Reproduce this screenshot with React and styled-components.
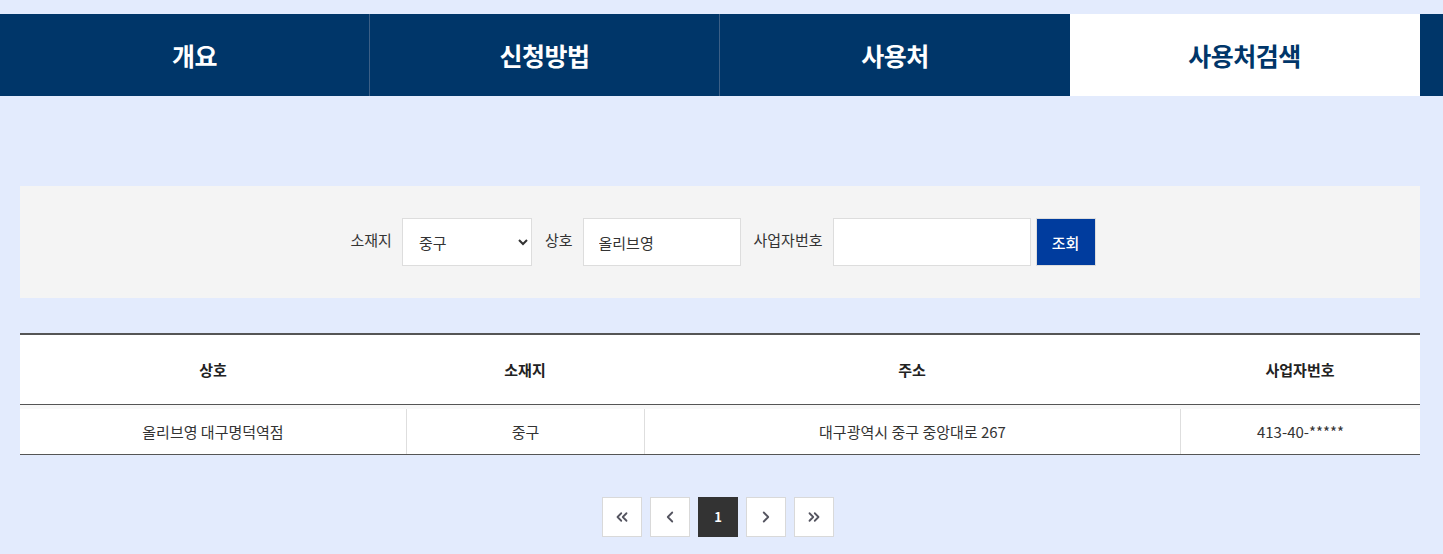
import styled, { createGlobalStyle } from 'styled-components';
import { ChevronLeft, ChevronRight, ChevronsLeft, ChevronsRight } from 'lucide-react';

const GlobalStyle = createGlobalStyle`
    html, body {
        margin: 0;
        padding: 0;
        background: #e3ebfd;
        font-family: "Noto Sans CJK KR", "Noto Sans", sans-serif;
        color: #333333;
    }
    * { box-sizing: border-box; }
`;

const tabs = ['개요', '신청방법', '사용처', '사용처검색'];

const columns = [
    { title: '상호', width: 386 },
    { title: '소재지', width: 238 },
    { title: '주소', width: 536 },
    { title: '사업자번호', width: 240 },
];

const rows = [
    ['올리브영 대구명덕역점', '중구', '대구광역시 중구 중앙대로 267', '413-40-*****'],
];

export default function App() {
    return (
        <>
            <GlobalStyle />
            <Page>
                <TabBar>
                    <TabList>
                        {tabs.map((t, i) => (
                            <Tab key={t} active={i === tabs.length - 1}>{t}</Tab>
                        ))}
                    </TabList>
                </TabBar>

                <Container>
                    <SearchBox>
                        <Label>소재지</Label>
                        <Select defaultValue="중구">
                            <option>중구</option>
                            <option>동구</option>
                            <option>서구</option>
                        </Select>
                        <Label>상호</Label>
                        <Input width={158} defaultValue="올리브영" />
                        <Label>사업자번호</Label>
                        <Input width={198} defaultValue="" />
                        <SearchButton>조회</SearchButton>
                    </SearchBox>

                    <Table>
                        <colgroup>
                            {columns.map(c => <col key={c.title} style={{ width: c.width }} />)}
                        </colgroup>
                        <thead>
                            <tr>
                                {columns.map(c => <Th key={c.title}>{c.title}</Th>)}
                            </tr>
                        </thead>
                        <tbody>
                            {rows.map((r, i) => (
                                <tr key={i}>
                                    {r.map((cell, j) => <Td key={j} first={j === 0}><span>{cell}</span></Td>)}
                                </tr>
                            ))}
                        </tbody>
                    </Table>

                    <Pagination>
                        <PageButton><ChevronsLeft size={18} strokeWidth={2.4} /></PageButton>
                        <PageButton><ChevronLeft size={18} strokeWidth={2.4} /></PageButton>
                        <PageButton active>1</PageButton>
                        <PageButton><ChevronRight size={18} strokeWidth={2.4} /></PageButton>
                        <PageButton><ChevronsRight size={18} strokeWidth={2.4} /></PageButton>
                    </Pagination>
                </Container>
            </Page>
        </>
    );
}

const Page = styled.div`
    padding-top: 14px;
    width: 1443px;
    height: 554px;
    overflow: hidden;
`;

const TabBar = styled.nav`
    background: #003669;
    height: 82px;
    padding-left: 20px;
`;

const TabList = styled.ul`
    display: flex;
    margin: 0;
    padding: 0;
    list-style: none;
    width: 1400px;
    height: 100%;
`;

const Tab = styled.li`
    width: 350px;
    display: flex;
    align-items: center;
    justify-content: center;
    font-size: 25px;
    font-weight: 700;
    letter-spacing: -0.5px;
    color: ${props => props.active ? '#003669' : '#ffffff'};
    background: ${props => props.active ? '#ffffff' : 'transparent'};
    border-right: 1px solid ${props => props.active ? 'transparent' : '#3b5f86'};

    &:nth-child(3) { border-right: none; }
`;

const Container = styled.div`
    width: 1400px;
    margin-left: 20px;
    padding-top: 90px;
`;

const SearchBox = styled.div`
    background: #f4f4f4;
    height: 112px;
    display: flex;
    align-items: center;
    justify-content: center;
    padding-left: 6px;
`;

const Label = styled.span`
    font-size: 15px;
    color: #333;
    margin: 0 10px 0 13px;
    position: relative;
    top: -3px;

    &:first-child { margin-left: 0; }
`;

const Select = styled.select`
    width: 130px;
    height: 48px;
    border: 1px solid #dddddd;
    background: #ffffff;
    padding: 0 12px;
    font-family: inherit;
    font-size: 15px;
    color: #333;
    border-radius: 0;
    outline: none;
`;

const Input = styled.input`
    width: ${props => props.width}px;
    height: 48px;
    border: 1px solid #dddddd;
    background: #ffffff;
    padding: 0 15px;
    font-family: inherit;
    font-size: 15px;
    color: #333;
    outline: none;
`;

const SearchButton = styled.button`
    width: 60px;
    height: 48px;
    margin-left: 5px;
    background: #003c9e;
    border: 1px solid #dddddd;
    color: #ffffff;
    font-family: inherit;
    font-size: 15px;
    font-weight: 500;
    cursor: pointer;
`;

const Table = styled.table`
    width: 1400px;
    margin-top: 35px;
    border-collapse: collapse;
    table-layout: fixed;
    background: #ffffff;
    border-top: 2px solid #555555;
    border-bottom: 1px solid #555555;
`;

const Th = styled.th`
    height: 70px;
    font-size: 15px;
    font-weight: 700;
    color: #222;
    border-bottom: 1px solid #555555;
    padding: 0;
`;

const Td = styled.td`
    height: 49px;
    padding: 4px 0 0;
    background: #f8f8f8;
    font-size: 15px;
    color: #333;
    text-align: center;

    span {
        display: flex;
        align-items: center;
        justify-content: center;
        height: 45px;
        background: #ffffff;
        border-left: ${props => props.first ? 'none' : '1px solid #dedede'};
    }
`;

const Pagination = styled.div`
    display: flex;
    justify-content: center;
    gap: 8px;
    margin-top: 42px;
    padding-right: 4px;
`;

const PageButton = styled.button`
    width: 40px;
    height: 40px;
    display: flex;
    align-items: center;
    justify-content: center;
    padding: 0;
    border: 1px solid ${props => props.active ? '#333333' : '#d9d9d9'};
    background: ${props => props.active ? '#333333' : '#ffffff'};
    color: ${props => props.active ? '#ffffff' : '#555560'};
    font-family: inherit;
    font-size: 13px;
    font-weight: 700;
    cursor: pointer;
`;
